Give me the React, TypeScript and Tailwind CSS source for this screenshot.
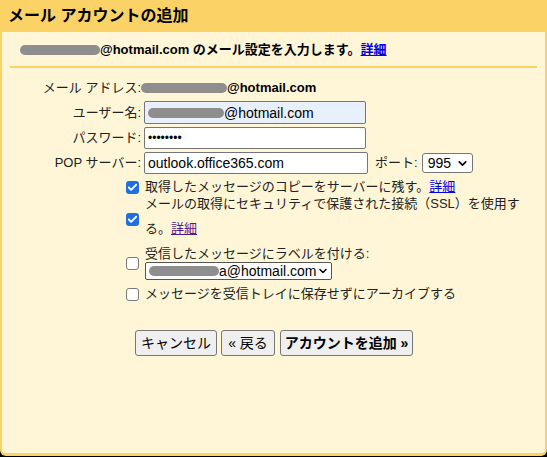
import { ChevronDown, Check } from "lucide-react";

const font = { fontFamily: '"Liberation Sans", "Noto Sans CJK JP", sans-serif' };

const Blur = ({ w }: { w: number }) => (
  <span
    className="inline-block h-[10px] rounded-full bg-[#8e8e8e] blur-[0.6px] align-middle"
    style={{ width: w }}
  />
);

const Box = ({ checked }: { checked?: boolean }) =>
  checked ? (
    <span className="flex h-[13px] w-[13px] items-center justify-center rounded-[3px] bg-[#1f6fe5]">
      <Check className="h-[11px] w-[11px] text-white" strokeWidth={4} />
    </span>
  ) : (
    <span className="block h-[13px] w-[13px] rounded-[3px] border border-[#7a7a7a] bg-white" />
  );

export default function App() {
  return (
    <div className="h-[457px] w-[547px] bg-black text-[13px] leading-[16px] text-[#222]" style={font}>
      <div className="flex h-[456px] flex-col overflow-hidden rounded-b-[6px] border-x-2 border-b-[3px] border-[#fbd266] bg-[#fff6d7]">
        <div className="flex h-[32px] shrink-0 items-center bg-[#fbd266] pl-[6px] text-[16px] font-bold text-black">
          メール アカウントの追加
        </div>

        <div className="mt-[10px] flex h-[16px] items-center pl-[18px] font-bold text-black">
          <Blur w={80} />
          <span>@hotmail.com のメール設定を入力します。</span>
          <a className="text-[#0000ee] underline">詳細</a>
        </div>

        <div className="mx-[8px] mt-[8px] h-[2px] shrink-0 bg-[#fbd266]" />

        <div className="mt-[11px] grid grid-cols-[139px_auto] items-center gap-x-[3px]">
          <div className="text-right">メール アドレス:</div>
          <div className="-ml-[3px] flex h-[18px] items-center font-bold text-black">
            <Blur w={86} />
            <span>@hotmail.com</span>
          </div>

          <div className="mt-[4px] text-right">ユーザー名:</div>
          <div className="mt-[4px] flex h-[23px] w-[222px] items-center rounded-[2px] border border-[#767676] bg-[#e8f0fe] pl-[3px] text-[14px] text-black">
            <Blur w={76} />
            <span>@hotmail.com</span>
          </div>

          <div className="mt-[3px] text-right">パスワード:</div>
          <div className="mt-[3px] flex h-[22px] w-[222px] items-center rounded-[2px] border border-[#767676] bg-white pl-[3px] text-[12px] leading-none text-black">
            ••••••••
          </div>

          <div className="mt-[3px] text-right">POP サーバー:</div>
          <div className="mt-[3px] flex items-center">
            <div className="flex h-[22px] w-[224px] items-center rounded-[2px] border border-[#767676] bg-white pl-[3px] text-[14px] text-black">
              outlook.office365.com
            </div>
            <span className="ml-[7px]">ポート:</span>
            <div className="ml-[4px] flex h-[20px] w-[51px] items-center justify-between rounded-[3px] border border-[#767676] bg-white pl-[5px] pr-[3px] text-[14px] text-black">
              995
              <ChevronDown className="h-[13px] w-[13px]" strokeWidth={3} />
            </div>
          </div>
        </div>

        <div className="mt-[5px] grid grid-cols-[139px_auto] items-center gap-x-[4px]">
          <div className="flex justify-end pr-[2px]">
            <Box checked />
          </div>
          <div className="flex h-[16px] items-center">
            取得したメッセージのコピーをサーバーに残す。
            <a className="text-[#0000ee] underline">詳細</a>
          </div>

          <div className="mt-[18px] flex self-start justify-end pr-[2px]">
            <Box checked />
          </div>
          <div className="mt-[1px] flex flex-col">
            <div className="h-[16px]">メールの取得にセキュリティで保護された接続（SSL）を使用す</div>
            <div className="mt-[9px] h-[16px]">
              る。<a className="text-[#551a8b] underline">詳細</a>
            </div>
          </div>

          <div className="mt-[9px] flex justify-end pr-[2px]">
            <Box />
          </div>
          <div className="mt-[9px]">
            <div className="h-[16px]">受信したメッセージにラベルを付ける:</div>
            <div className="flex h-[18px] w-[187px] items-center justify-between rounded-[2px] border border-[#555] bg-white pl-[3px] pr-[2px] text-[14px] text-black">
              <span className="flex items-center whitespace-nowrap">
                <Blur w={70} />
                a@hotmail.com
              </span>
              <ChevronDown className="h-[12px] w-[12px] shrink-0" strokeWidth={3} />
            </div>
          </div>

          <div className="mt-[6px] flex justify-end pr-[2px]">
            <Box />
          </div>
          <div className="mt-[6px] flex h-[16px] items-center">メッセージを受信トレイに保存せずにアーカイブする</div>
        </div>

        <div className="ml-[133px] mt-[28px] flex gap-[4px] text-[14px] text-black">
          <button className="h-[26px] w-[82px] rounded-[3px] border border-[#767676] bg-[#efefef]">
            キャンセル
          </button>
          <button className="h-[26px] w-[54px] rounded-[3px] border border-[#767676] bg-[#efefef]">
            « 戻る
          </button>
          <button className="ml-[1px] h-[26px] w-[133px] rounded-[3px] border border-[#767676] bg-[#efefef] font-bold">
            アカウントを追加 »
          </button>
        </div>
      </div>
    </div>
  );
}
